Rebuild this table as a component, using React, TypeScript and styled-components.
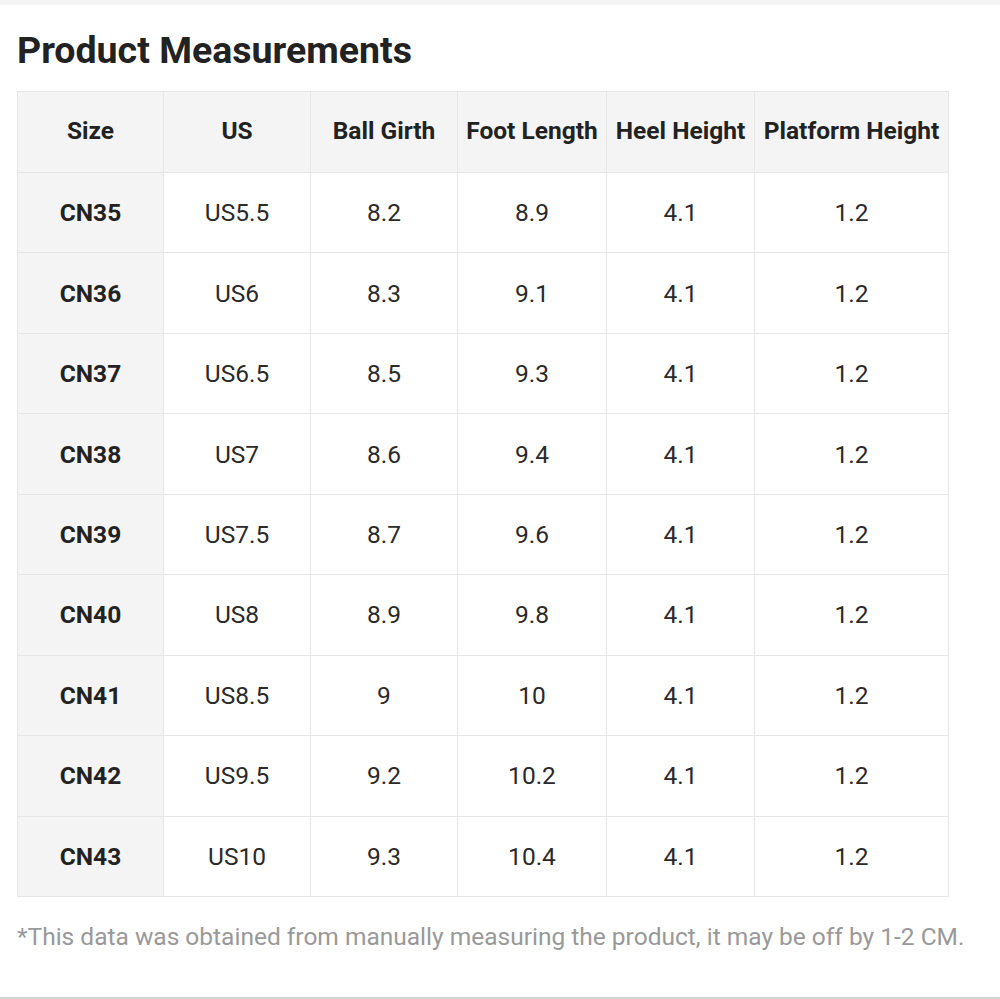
import React from "react";
import styled, { createGlobalStyle } from "styled-components";

const Global = createGlobalStyle`
  html, body { margin: 0; padding: 0; background: #fff; }
  body { font-family: Roboto, "Liberation Sans", sans-serif; }
`;

const Page = styled.div`
  width: 1000px;
  height: 999px;
  box-sizing: border-box;
  border-top: 5px solid #f4f4f4;
  border-bottom: 2px solid #d4d4d4;
  display: flex;
  flex-direction: column;
  padding: 0 17px;
`;

const Title = styled.h1`
  margin: 23px 0 0;
  font-size: 37.5px;
  line-height: 44px;
  font-weight: 700;
  color: #222;
`;

const Table = styled.table`
  margin-top: 19px;
  border-collapse: collapse;
  table-layout: fixed;
  width: 931px;
  color: #222;
`;

const Th = styled.th`
  height: 81px;
  padding: 0 0 3px;
  box-sizing: border-box;
  border: 1px solid #e6e6e6;
  background: #f4f4f4;
  font-size: 24.5px;
  font-weight: 700;
  text-align: center;
  white-space: nowrap;
`;

const Td = styled.td<{ $head?: boolean }>`
  height: 79.45px;
  padding: 0;
  border: 1px solid #e6e6e6;
  background: ${(p) => (p.$head ? "#f4f4f4" : "#fff")};
  color: ${(p) => (p.$head ? "#222" : "#2a2a2a")};
  font-size: 24.5px;
  font-weight: ${(p) => (p.$head ? 700 : 400)};
  text-align: center;
`;

const Note = styled.p`
  margin: 25px 0 0;
  font-size: 24.5px;
  line-height: 30px;
  color: #999;
  white-space: nowrap;
`;

const widths = [146, 147, 147, 149, 148, 194];
const headers = ["Size", "US", "Ball Girth", "Foot Length", "Heel Height", "Platform Height"];
const rows = [
  ["CN35", "US5.5", "8.2", "8.9", "4.1", "1.2"],
  ["CN36", "US6", "8.3", "9.1", "4.1", "1.2"],
  ["CN37", "US6.5", "8.5", "9.3", "4.1", "1.2"],
  ["CN38", "US7", "8.6", "9.4", "4.1", "1.2"],
  ["CN39", "US7.5", "8.7", "9.6", "4.1", "1.2"],
  ["CN40", "US8", "8.9", "9.8", "4.1", "1.2"],
  ["CN41", "US8.5", "9", "10", "4.1", "1.2"],
  ["CN42", "US9.5", "9.2", "10.2", "4.1", "1.2"],
  ["CN43", "US10", "9.3", "10.4", "4.1", "1.2"],
];

export default function App() {
  return (
    <>
      <Global />
      <Page>
        <Title>Product Measurements</Title>
        <Table>
          <colgroup>
            {widths.map((w, i) => (
              <col key={i} style={{ width: w }} />
            ))}
          </colgroup>
          <thead>
            <tr>
              {headers.map((h) => (
                <Th key={h}>{h}</Th>
              ))}
            </tr>
          </thead>
          <tbody>
            {rows.map((r) => (
              <tr key={r[0]}>
                {r.map((c, i) => (
                  <Td key={i} $head={i === 0}>
                    {c}
                  </Td>
                ))}
              </tr>
            ))}
          </tbody>
        </Table>
        <Note>*This data was obtained from manually measuring the product, it may be off by 1-2 CM.</Note>
      </Page>
    </>
  );
}
